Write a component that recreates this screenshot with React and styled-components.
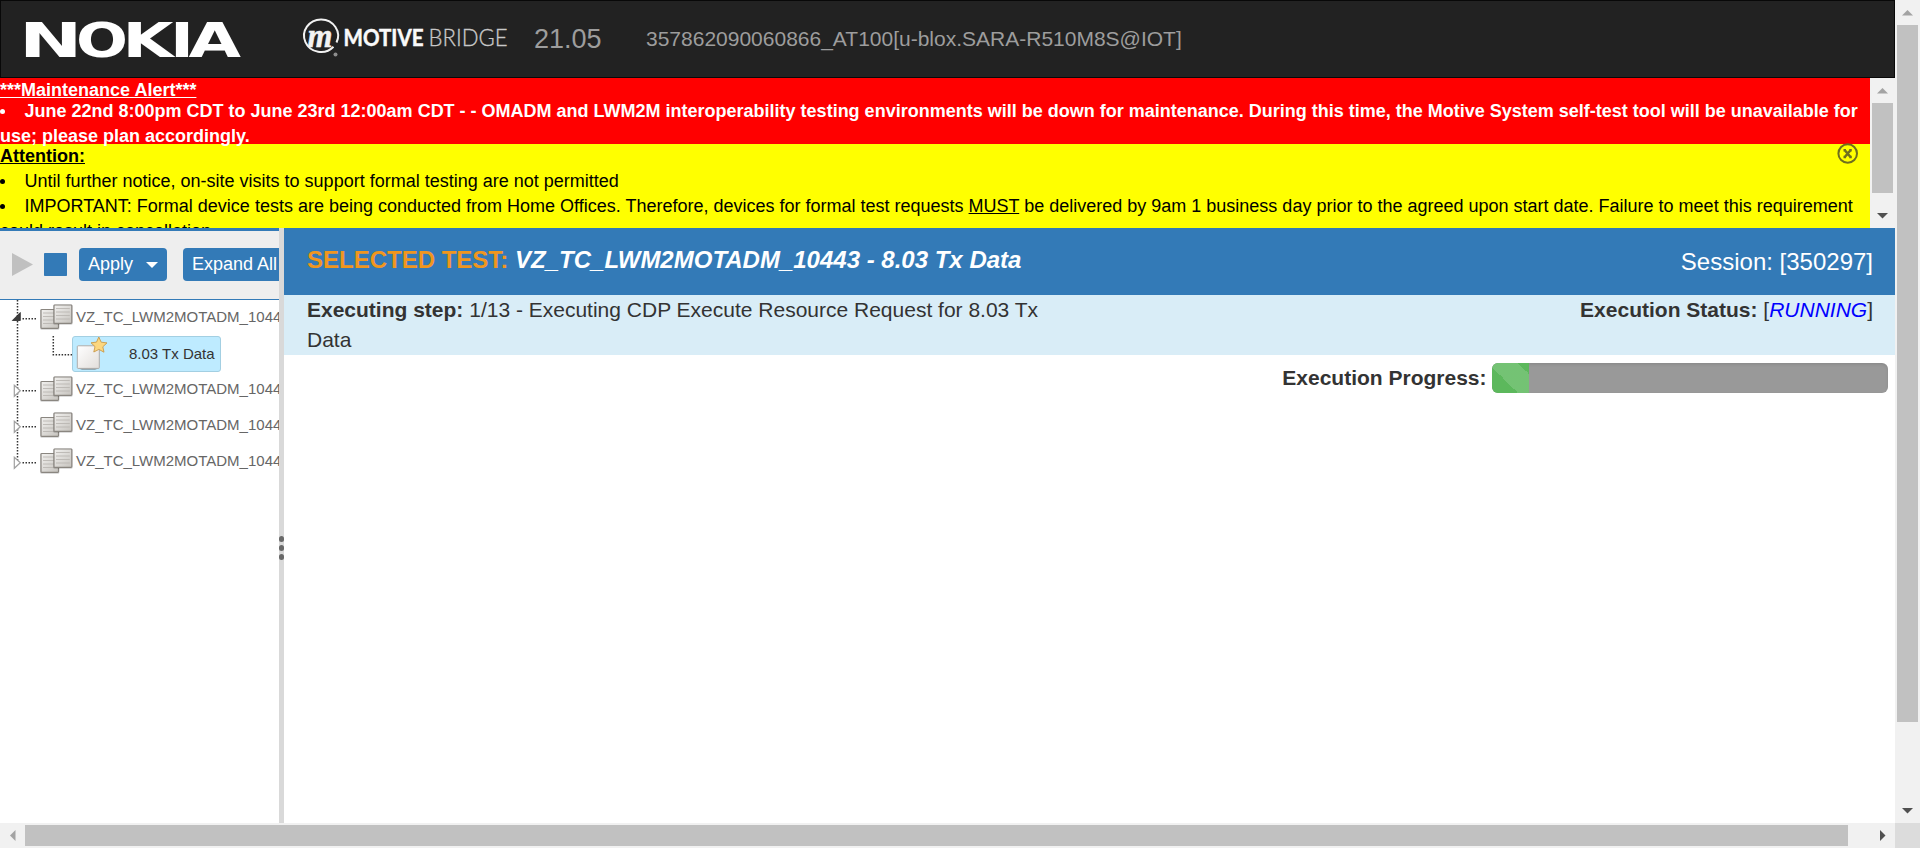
import React from "react";
import styled, { createGlobalStyle } from "styled-components";

const GlobalStyle = createGlobalStyle`
  * { box-sizing: border-box; }
  body { margin: 0; background: #fff; overflow: hidden; }
  svg { display: block; flex: none; overflow: visible; }
`;

const Shell = styled.div`
  width: 1920px;
  height: 848px;
  display: grid;
  grid-template-columns: 1895px 25px;
  grid-template-rows: 823px 25px;
  font-family: "Liberation Sans", Arial, sans-serif;
  font-size: 21px;
  color: #333;
  overflow: hidden;
`;

const Page = styled.div`
  display: flex;
  flex-direction: column;
  min-width: 0;
  overflow: hidden;
`;

/* ---------- header ---------- */
const Header = styled.header`
  height: 78px;
  flex: none;
  display: flex;
  align-items: flex-start;
  background: #222;
  border: 1px solid #080808;
  color: #9d9d9d;
`;
const NokiaBox = styled.div`
  margin: 6px 0 0 20px;
  width: 226px;
`;
const MotiveBox = styled.div`
  margin: 14px 0 0 53px;
  width: 213px;
`;
const Version = styled.div`
  margin: 21px 0 0 21px;
  width: 112px;
  font-size: 27px;
  line-height: 34px;
`;
const DeviceName = styled.div`
  margin-top: 23px;
  line-height: 30px;
  white-space: nowrap;
`;

/* ---------- banner ---------- */
const Banner = styled.section`
  height: 150px;
  flex: none;
  display: flex;
  font-size: 18px;
  line-height: 25px;
  overflow: hidden;
`;
const BannerBody = styled.div`
  width: 1870px;
  position: relative;
`;
const Alert = styled.div`
  position: relative;
  z-index: 1;
  height: 66px;
  background: #f00;
  color: #fff;
  font-weight: bold;
`;
const Notice = styled.div`
  height: 84px;
  background: #ff0;
  color: #000;
`;
const AlertTitle = styled.div`
  height: 21px;
  line-height: 25px;
  text-decoration: underline;
`;
const NoticeTitle = styled.div`
  height: 25px;
  line-height: 24px;
  font-weight: bold;
  text-decoration: underline;
`;
const Item = styled.div`
  &::before {
    content: "";
    display: inline-block;
    width: 5px;
    height: 5px;
    margin: 0 20px 3px -0.5px;
    border-radius: 50%;
    background: currentColor;
  }
`;
const CloseButton = styled.button`
  position: absolute;
  z-index: 2;
  top: 65px;
  left: 1837px;
  padding: 0;
  border: 0;
  background: none;
`;

/* ---------- scroll bars ---------- */
const ScrollBar = styled.div`
  display: flex;
  flex-direction: ${(p) => (p.$horizontal ? "row" : "column")};
  align-items: center;
  background: #f1f1f1;
  ${(p) => (p.$horizontal ? "height: 25px;" : "width: 25px;")}
`;
const ArrowCell = styled.div`
  width: 25px;
  height: 25px;
  flex: none;
  display: flex;
  align-items: center;
  justify-content: center;
`;
const Thumb = styled.div`
  background: #c1c1c1;
  flex: none;
  width: ${(p) => p.$w}px;
  height: ${(p) => p.$h}px;
`;
const Spacer = styled.div`
  flex: 1;
`;
const Corner = styled.div`
  background: #dcdcdc;
`;

/* ---------- workspace ---------- */
const Workspace = styled.div`
  flex: 1;
  display: flex;
  min-height: 0;
`;
const Sidebar = styled.aside`
  width: 279px;
  flex: none;
  overflow: hidden;
`;
const Toolbar = styled.div`
  height: 72px;
  display: flex;
  align-items: flex-start;
  padding: 17px 0 0 12px;
  background: #eee;
  border-top: 3px solid #337ab7;
  border-bottom: 1px solid #337ab7;
`;
const ToolIcon = styled.div`
  margin: 5px ${(p) => p.$gap}px 0 0;
`;
const Button = styled.button`
  flex: none;
  display: flex;
  align-items: center;
  width: ${(p) => p.$w}px;
  height: 33px;
  margin-right: 16px;
  padding: 0 0 1px 9px;
  gap: 13px;
  border: 0;
  border-radius: 4px;
  background: #337ab7;
  color: #fff;
  font: 18px/27px "Liberation Sans", Arial, sans-serif;
  white-space: nowrap;
`;
const Caret = styled.span`
  margin-top: 1px;
  border: 6px solid transparent;
  border-top-color: #fff;
  border-bottom: 0;
`;

const Tree = styled.div`
  display: flex;
  flex-direction: column;
  font-size: 15px;
`;
const TreeRow = styled.div`
  height: 36px;
  display: flex;
  color: #666;
  line-height: 34px;
  white-space: nowrap;
`;
const NodeLabel = styled.span`
  margin-left: 1px;
`;
const Leaf = styled.div`
  width: 149px;
  height: 36px;
  display: flex;
  background: #beebff;
  border: 1px solid #a3cfe2;
  border-radius: 3px;
  color: #333;
`;
const LeafLabel = styled.span`
  margin-left: 16px;
`;

const Splitter = styled.div`
  width: 5px;
  flex: none;
  display: flex;
  flex-direction: column;
  gap: 3px;
  padding-top: 308px;
  background: #d9d9d9;
`;
const Grip = styled.i`
  height: 6px;
  border-radius: 3px;
  background: #686868;
`;

const Main = styled.main`
  flex: 1;
  min-width: 0;
`;
const TitleBar = styled.div`
  height: 67px;
  display: flex;
  justify-content: space-between;
  padding: 17px 22px 0 23px;
  background: #337ab7;
  color: #fff;
  font-size: 24px;
  line-height: 30px;
`;
const TestTitle = styled.div`
  font-weight: bold;
`;
const Orange = styled.span`
  color: #f0961e;
`;
const Session = styled.div`
  padding-top: 2px;
`;
const StatusBar = styled.div`
  height: 60px;
  display: flex;
  justify-content: space-between;
  padding: 0 22px 0 23px;
  background: #d9edf7;
  line-height: 30px;
`;
const Step = styled.div`
  width: 760px;
`;
const Running = styled.em`
  color: #00f;
`;
const ProgressRow = styled.div`
  display: flex;
  justify-content: flex-end;
  gap: 5.5px;
  padding: 8px 7px 0 0;
  line-height: 30px;
`;
const Track = styled.div`
  width: 396px;
  height: 30px;
  border-radius: 6px;
  overflow: hidden;
  background: #999;
  box-shadow: inset 0 1.5px 3px rgba(0, 0, 0, 0.1);
`;
const Fill = styled.div`
  width: 37px;
  height: 30px;
  background-color: #5cb85c;
  background-image: linear-gradient(
    45deg,
    rgba(255, 255, 255, 0.15) 25%,
    transparent 25%,
    transparent 50%,
    rgba(255, 255, 255, 0.15) 50%,
    rgba(255, 255, 255, 0.15) 75%,
    transparent 75%
  );
  background-size: 60px 60px;
  background-position: -4px 0;
`;

const arrowPaths = {
  up: "M0 8.5 L5.5 3 L11 8.5Z",
  down: "M0 3 L5.5 8.5 L11 3Z",
  left: "M8.5 0 L3 5.5 L8.5 11Z",
  right: "M3 0 L8.5 5.5 L3 11Z",
};
const Arrow = ({ dir, dim }) => (
  <ArrowCell>
    <svg width="11" height="11" viewBox="0 0 11 11">
      <path d={arrowPaths[dir]} fill={dim ? "#a3a3a3" : "#505050"} />
    </svg>
  </ArrowCell>
);

/* letter, left edge, advance width */
const nokia = [
  ["N", -2, 63.4],
  ["O", 55, 52],
  ["K", 101.5, 51],
  ["I", 149, 24],
  ["A", 167.5, 52.5],
];
const NokiaLogo = () => (
  <svg width="226" height="64" viewBox="0 0 226 64">
    <g fill="#fff" fontFamily="DejaVu Sans, sans-serif" fontWeight="bold" fontSize="48.5">
      {nokia.map(([c, x, w]) => (
        <text key={c} x={x} y="50" textLength={w} lengthAdjust="spacingAndGlyphs">
          {c}
        </text>
      ))}
    </g>
  </svg>
);

const MotiveLogo = () => (
  <svg width="213" height="46" viewBox="0 0 213 46">
    <path
      d="M33.5 31.8 A17 16.3 0 1 1 36.5 27.5"
      fill="none"
      stroke="#f2f2f2"
      strokeWidth="2"
    />
    <text
      x="7.5"
      y="32"
      fill="#f2f2f2"
      stroke="#f2f2f2"
      strokeWidth="0.5"
      fontFamily="Liberation Serif, serif"
      fontStyle="italic"
      fontWeight="bold"
      fontSize="33"
      textLength="25"
      lengthAdjust="spacingAndGlyphs"
    >
      m
    </text>
    <circle cx="35.5" cy="39.5" r="2" fill="#8d8d8d" />
    <text
      x="43.5"
      y="31"
      fill="#fafafa"
      stroke="#fafafa"
      strokeWidth="0.5"
      fontFamily="Lato, sans-serif"
      fontWeight="bold"
      fontSize="23"
      textLength="80"
      lengthAdjust="spacingAndGlyphs"
    >
      MOTIVE
    </text>
    <text
      x="128.5"
      y="31"
      fill="#c8c8c8"
      stroke="#c8c8c8"
      strokeWidth="0.3"
      fontFamily="Lato, sans-serif"
      fontWeight="300"
      fontSize="23"
      textLength="79"
      lengthAdjust="spacingAndGlyphs"
    >
      BRIDGE
    </text>
  </svg>
);

const CloseIcon = () => (
  <svg width="22" height="22" viewBox="0 0 22 22">
    <circle cx="10.7" cy="10.5" r="9.3" fill="none" stroke="#6e6e1e" strokeWidth="2" />
    <path
      d="M6.5 7.2H9M12.2 7.2H14.8M6.5 14H9M12.2 14H14.8M7.8 7.2L13.5 14M13.5 7.2L7.8 14"
      fill="none"
      stroke="#6e6e1e"
      strokeWidth="2.5"
    />
  </svg>
);

const Sheet = ({ x, y, w, h }) => (
  <g>
    <rect x={x - 0.8} y={y - 0.4} width={w + 1.6} height={h + 1.8} rx="1.5" fill="#000" opacity="0.18" />
    <rect x={x} y={y} width={w} height={h} rx="0.8" fill="url(#sheet)" stroke="#8a8680" strokeWidth="1.2" />
    <path
      d={[3.5, 7, 10.5, 14].map((o) => `M${x + 2} ${y + o}h${w - 4}`).join("")}
      stroke="#bab7b2"
      strokeWidth="0.9"
    />
  </g>
);

const FolderGutter = ({ open, last }) => (
  <svg width="75" height="36" viewBox="0 0 75 36">
    <defs>
      <linearGradient id="sheet" x1="0" y1="0" x2="1" y2="1">
        <stop offset="0" stopColor="#f2f1ef" />
        <stop offset="1" stopColor="#c6c3be" />
      </linearGradient>
    </defs>
    <path d={last ? "M17.5 0V17" : "M17.5 0V36"} stroke="#333" strokeWidth="1.5" strokeDasharray="1.5 1.5" />
    <path d="M22.5 18.7H36" stroke="#333" strokeWidth="1.5" strokeDasharray="1.5 1.5" />
    {open ? (
      <path d="M20.3 12.5V20.5H12.3Z" fill="#3c3c3c" stroke="#2a2a2a" strokeWidth="0.8" />
    ) : (
      <path d="M14.3 13.3L20.3 18.8L14.3 24.3Z" fill="#fff" stroke="#a0a0a0" strokeWidth="1.2" />
    )}
    <Sheet x={41} y={9.5} width={17} w={17.5} h={18.8} />
    <Sheet x={54} y={5} w={17.8} h={18.3} />
  </svg>
);

const LeafGutter = () => (
  <svg width="72" height="36" viewBox="0 0 72 36">
    <path d="M17.5 0V36" stroke="#333" strokeWidth="1.5" strokeDasharray="1.5 1.5" />
    <path d="M53.3 0V18.7H72" fill="none" stroke="#333" strokeWidth="1.5" strokeDasharray="1.5 1.5" />
  </svg>
);

const StarPage = () => (
  <svg width="40" height="34" viewBox="0 0 40 34">
    <defs>
      <linearGradient id="page" x1="0" y1="0" x2="1" y2="1">
        <stop offset="0" stopColor="#fff" />
        <stop offset="1" stopColor="#e2dedb" />
      </linearGradient>
    </defs>
    <path d="M5 31h21l-4 2h-13z" fill="#8fa9b5" />
    <rect x="4.3" y="8.8" width="22" height="22.6" rx="0.8" fill="url(#page)" stroke="#aaa5a1" strokeWidth="0.9" />
    <path
      d="M25.8 0L28.2 5.2L34 5.9L29.8 9.8L31 15.2L25.9 12.4L20.8 15L22 9.6L18 5.8L23.5 5.1Z"
      fill="#fcd77f"
      stroke="#c99a4b"
      strokeWidth="0.9"
    />
  </svg>
);

const NODE = "VZ_TC_LWM2MOTADM_1044";

const FolderRow = ({ open, last }) => (
  <TreeRow>
    <FolderGutter open={open} last={last} />
    <NodeLabel>{NODE}</NodeLabel>
  </TreeRow>
);

export default function App() {
  return (
    <>
      <GlobalStyle />
      <Shell>
        <Page>
          <Header>
            <NokiaBox><NokiaLogo /></NokiaBox>
            <MotiveBox><MotiveLogo /></MotiveBox>
            <Version>21.05</Version>
            <DeviceName>357862090060866_AT100[u-blox.SARA-R510M8S@IOT]</DeviceName>
          </Header>

          <Banner>
            <BannerBody>
              <Alert>
                <AlertTitle>***Maintenance Alert***</AlertTitle>
                <Item>
                  June 22nd 8:00pm CDT to June 23rd 12:00am CDT - - OMADM and LWM2M interoperability testing
                  environments will be down for maintenance. During this time, the Motive System self-test
                  tool will be unavailable for use; please plan accordingly.
                </Item>
              </Alert>
              <Notice>
                <NoticeTitle>Attention:</NoticeTitle>
                <Item>Until further notice, on-site visits to support formal testing are not permitted</Item>
                <Item>
                  IMPORTANT: Formal device tests are being conducted from Home Offices. Therefore, devices
                  for formal test requests <u>MUST</u> be delivered by 9am 1 business day prior to the
                  agreed upon start date. Failure to meet this requirement could result in cancellation
                </Item>
              </Notice>
              <CloseButton aria-label="Close"><CloseIcon /></CloseButton>
            </BannerBody>
            <ScrollBar>
              <Arrow dir="up" dim />
              <Thumb $w={21} $h={90} />
              <Spacer />
              <Arrow dir="down" />
            </ScrollBar>
          </Banner>

          <Workspace>
            <Sidebar>
              <Toolbar>
                <ToolIcon $gap={11}>
                  <svg width="21" height="23" viewBox="0 0 21 23">
                    <path d="M0 0L21 11.5L0 23Z" fill="#c0c0c0" />
                  </svg>
                </ToolIcon>
                <ToolIcon $gap={12}>
                  <svg width="23" height="23" viewBox="0 0 23 23">
                    <rect width="23" height="23" rx="0.8" fill="#337ab7" />
                  </svg>
                </ToolIcon>
                <Button $w={88}>Apply<Caret /></Button>
                <Button $w={112}>Expand All</Button>
              </Toolbar>
              <Tree>
                <FolderRow open />
                <TreeRow>
                  <LeafGutter />
                  <Leaf>
                    <StarPage />
                    <LeafLabel>8.03 Tx Data</LeafLabel>
                  </Leaf>
                </TreeRow>
                <FolderRow />
                <FolderRow />
                <FolderRow last />
              </Tree>
            </Sidebar>
            <Splitter><Grip /><Grip /><Grip /></Splitter>
            <Main>
              <TitleBar>
                <TestTitle>
                  <Orange>SELECTED TEST:</Orange> <em>VZ_TC_LWM2MOTADM_10443 - 8.03 Tx Data</em>
                </TestTitle>
                <Session>Session: [350297]</Session>
              </TitleBar>
              <StatusBar>
                <Step>
                  <b>Executing step:</b> 1/13 - Executing CDP Execute Resource Request for 8.03 Tx Data
                </Step>
                <div><b>Execution Status:</b> [<Running>RUNNING</Running>]</div>
              </StatusBar>
              <ProgressRow>
                <b>Execution Progress:</b>
                <Track><Fill /></Track>
              </ProgressRow>
            </Main>
          </Workspace>
        </Page>

        <ScrollBar>
          <Arrow dir="up" dim />
          <Thumb $w={21} $h={697} />
          <Spacer />
          <Arrow dir="down" />
        </ScrollBar>
        <ScrollBar $horizontal>
          <Arrow dir="left" dim />
          <Thumb $w={1823} $h={21} />
          <Spacer />
          <Arrow dir="right" />
        </ScrollBar>
        <Corner />
      </Shell>
    </>
  );
}
